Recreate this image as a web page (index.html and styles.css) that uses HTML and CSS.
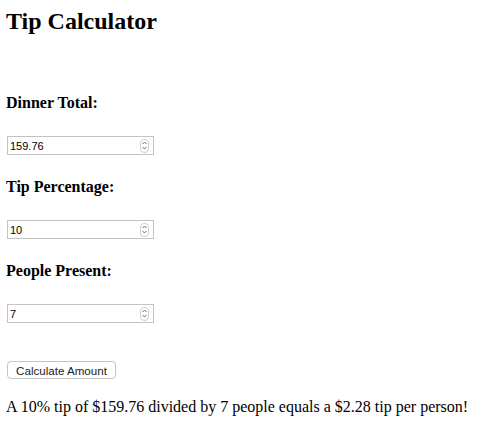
FILE: index.html
```html
<!DOCTYPE html>
<html>
<head>
<meta charset="utf-8">
<link rel="stylesheet" href="styles.css">
</head>
<body>
<h1 class="title">Tip Calculator</h1>
<div class="field">
  <h4 class="label">Dinner Total:</h4>
  <div class="num"><span class="val">159.76</span><span class="spin"><svg width="7" height="11" viewBox="0 0 7 11"><path d="M1.5 4 L3.5 2 L5.5 4 M1.5 7 L3.5 9 L5.5 7" fill="none" stroke="#6a6a6a" stroke-width="1"/></svg></span></div>
</div>
<div class="field">
  <h4 class="label">Tip Percentage:</h4>
  <div class="num"><span class="val">10</span><span class="spin"><svg width="7" height="11" viewBox="0 0 7 11"><path d="M1.5 4 L3.5 2 L5.5 4 M1.5 7 L3.5 9 L5.5 7" fill="none" stroke="#6a6a6a" stroke-width="1"/></svg></span></div>
</div>
<div class="field">
  <h4 class="label">People Present:</h4>
  <div class="num"><span class="val">7</span><span class="spin"><svg width="7" height="11" viewBox="0 0 7 11"><path d="M1.5 4 L3.5 2 L5.5 4 M1.5 7 L3.5 9 L5.5 7" fill="none" stroke="#6a6a6a" stroke-width="1"/></svg></span></div>
</div>
<button class="btn">Calculate Amount</button>
<p class="result">A 10% tip of $159.76 divided by 7 people equals a $2.28 tip per person!</p>
</body>
</html>
```
FILE: styles.css
```css
html, body { background: #fff; }
body {
  margin: 0;
  padding: 0 6px;
  font-family: "Liberation Serif", serif;
  font-size: 16px;
  color: #000;
}
.title {
  margin: 0;
  padding-top: 6px;
  font-size: 24px;
  line-height: 30px;
  font-weight: bold;
}
.field { margin: 0; }
.label {
  margin: 0;
  padding-top: 58px;
  font-size: 16px;
  line-height: 18px;
  font-weight: bold;
}
.field + .field .label { padding-top: 23px; }
.num {
  margin-top: 24px;
  margin-left: 1px;
  width: 139px;
  height: 17px;
  border: 1px solid #c3c3c3;
  display: flex;
  align-items: center;
  justify-content: space-between;
  font-family: "Liberation Sans", sans-serif;
  font-size: 11px;
  padding: 0 4px 0 2px;
  box-sizing: content-box;
}
.spin {
  width: 7px;
  height: 12px;
  border: 1px solid #d0d0d0;
  border-radius: 4px;
  display: flex;
  align-items: center;
  justify-content: center;
}
.btn {
  display: block;
  margin: 38px 0 0 1px;
  width: 109px;
  height: 18px;
  padding: 0;
  background: #fff;
  border: 1px solid #c4c4c4;
  border-radius: 4px;
  font-family: "Liberation Sans", sans-serif;
  font-size: 11.6px;
  color: #222;
}
.result {
  margin: 18px 0 0;
  font-size: 16px;
  line-height: 20px;
}
```
